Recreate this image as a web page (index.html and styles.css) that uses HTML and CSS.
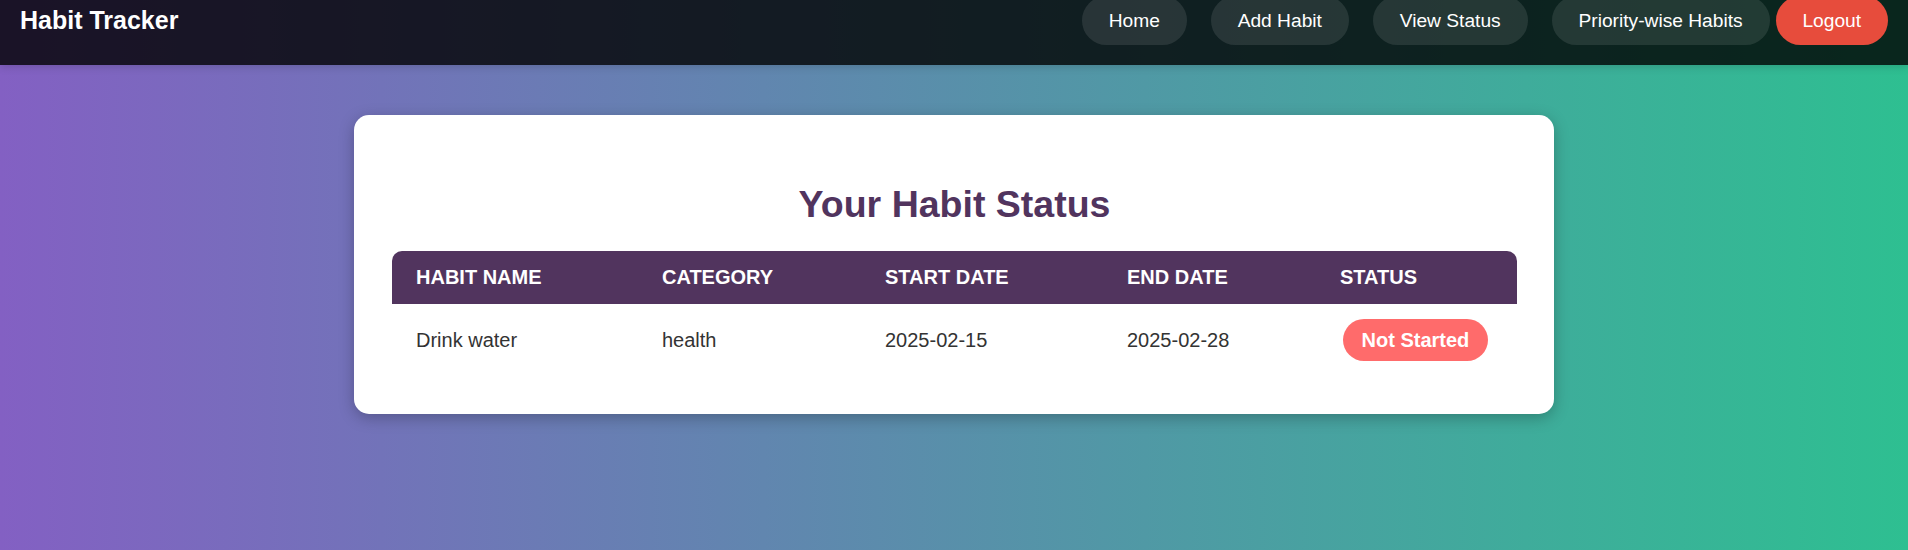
FILE: index.html
```html
<!DOCTYPE html>
<html lang="en">
<head>
<meta charset="UTF-8">
<title>Habit Tracker - Status</title>
<link rel="stylesheet" href="styles.css">
</head>
<body>
<header class="topbar">
  <div class="brand">Habit Tracker</div>
  <nav class="nav">
    <div class="nav-links">
      <a class="nav-btn" href="#">Home</a>
      <a class="nav-btn" href="#">Add Habit</a>
      <a class="nav-btn" href="#">View Status</a>
      <a class="nav-btn" href="#">Priority-wise Habits</a>
    </div>
    <a class="logout-btn" href="#">Logout</a>
  </nav>
</header>

<main class="card">
  <h2 class="card-title">Your Habit Status</h2>
  <table class="status-table">
    <colgroup>
      <col class="c-name">
      <col class="c-cat">
      <col class="c-start">
      <col class="c-end">
      <col class="c-status">
    </colgroup>
    <thead>
      <tr>
        <th>Habit Name</th>
        <th>Category</th>
        <th>Start Date</th>
        <th>End Date</th>
        <th>Status</th>
      </tr>
    </thead>
    <tbody>
      <tr>
        <td>Drink water</td>
        <td>health</td>
        <td>2025-02-15</td>
        <td>2025-02-28</td>
        <td><span class="badge badge-not-started">Not Started</span></td>
      </tr>
    </tbody>
  </table>
</main>
</body>
</html>
```

FILE: styles.css
```css
* {
  box-sizing: border-box;
}

html, body {
  margin: 0;
  padding: 0;
}

body {
  font-family: "Liberation Sans", Arial, sans-serif;
  min-height: 100vh;
  background: linear-gradient(to right, #8360c3, #2ebf91);
  color: #333;
}

.topbar {
  height: 65px;
  padding: 0 20px 24px 20px;
  display: flex;
  align-items: center;
  justify-content: space-between;
  background: rgba(0, 0, 0, 0.8);
  box-shadow: 0 2px 8px rgba(0, 0, 0, 0.15);
}

.brand {
  color: #fff;
  font-size: 25px;
  font-weight: bold;
  line-height: normal;
}

.nav {
  display: flex;
  align-items: center;
  gap: 6px;
}

.nav-links {
  display: flex;
  align-items: center;
  gap: 24px;
}

.nav-btn,
.logout-btn {
  display: inline-block;
  color: #fff;
  text-decoration: none;
  font-size: 19.2px;
  line-height: 22px;
  padding: 13.5px 26.9px;
  border-radius: 25px;
  white-space: nowrap;
}

.nav-btn {
  background: rgba(255, 255, 255, 0.1);
}

.logout-btn {
  background: #e74c3c;
}

.card {
  width: 1200px;
  margin: 50px auto 0;
  padding: 38px 37px 38px 38px;
  background: #fff;
  border-radius: 15px;
  box-shadow: 0 4px 15px rgba(0, 0, 0, 0.25);
}

.card-title {
  margin: 30px 0 25px;
  text-align: center;
  font-size: 37.5px;
  line-height: normal;
  font-weight: bold;
  color: #51345e;
}

.status-table {
  width: 100%;
  border-collapse: collapse;
  table-layout: fixed;
}

.c-name { width: 246px; }
.c-cat { width: 223px; }
.c-start { width: 242px; }
.c-end { width: 213px; }
.c-status { width: 201px; }

.status-table th {
  background: #51345e;
  color: #fff;
  text-transform: uppercase;
  text-align: left;
  font-size: 20px;
  font-weight: bold;
  line-height: 23px;
  padding: 15px 24px;
}

.status-table th:first-child {
  border-top-left-radius: 10px;
}

.status-table th:last-child {
  border-top-right-radius: 10px;
}

.status-table td {
  font-size: 20px;
  line-height: 22px;
  color: #333;
  padding: 15px 24px;
  vertical-align: middle;
}

.badge {
  display: inline-block;
  margin-left: 3px;
  padding: 10px 18.5px;
  border-radius: 25px;
  font-weight: bold;
  color: #fff;
  line-height: 22px;
}

.badge-not-started {
  background: #ff6b6b;
}
```
